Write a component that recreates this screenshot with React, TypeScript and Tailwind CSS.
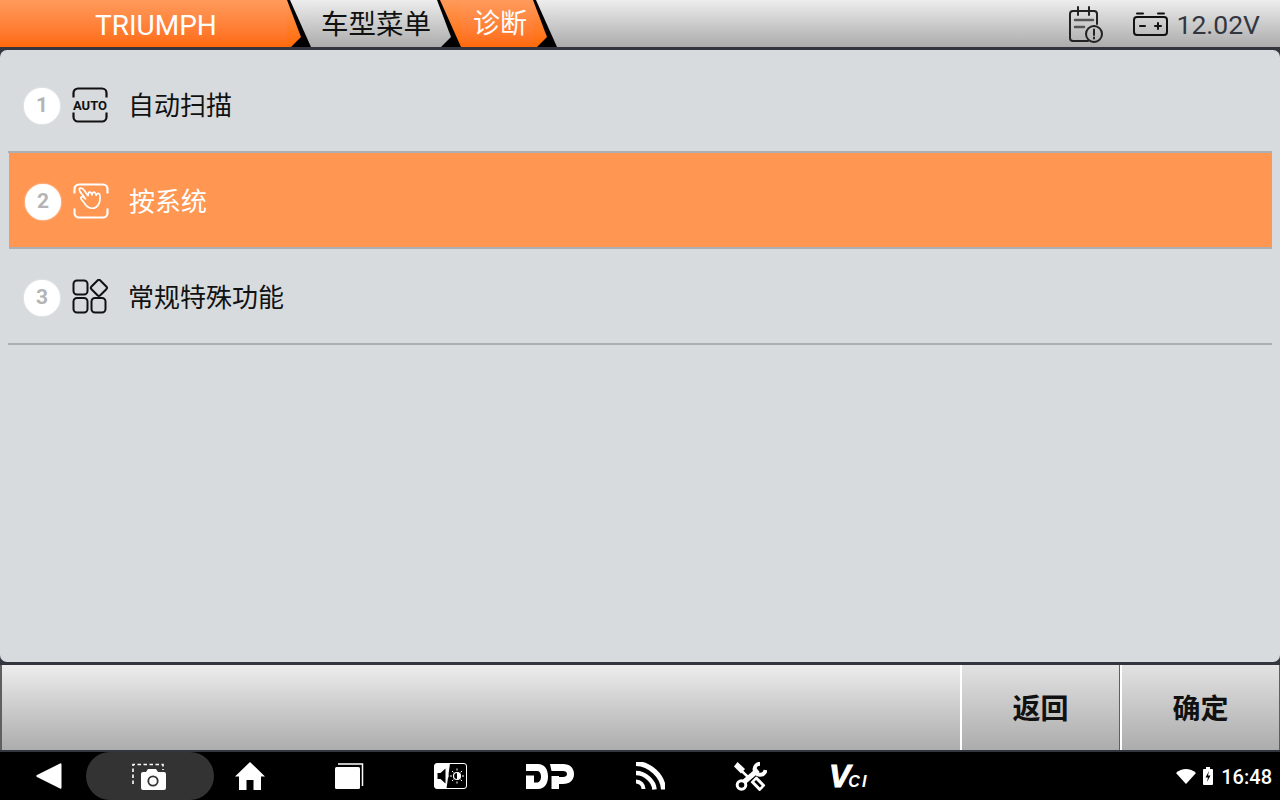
import React from "react";

const ORANGE: [string, string] = ["#ff9a5a", "#ff6a08"];
const GRAY: [string, string] = ["#ededed", "#acacac"];

function Sep({ id, left, right }: { id: string; left: [string, string]; right: [string, string] }) {
  return (
    <svg width="24" height="47" viewBox="0 0 24 47" className="shrink-0 block">
      <defs>
        <linearGradient id={`${id}l`} x1="0" y1="0" x2="0" y2="1">
          <stop offset="0" stopColor={left[0]} />
          <stop offset="1" stopColor={left[1]} />
        </linearGradient>
        <linearGradient id={`${id}r`} x1="0" y1="0" x2="0" y2="1">
          <stop offset="0" stopColor={right[0]} />
          <stop offset="1" stopColor={right[1]} />
        </linearGradient>
      </defs>
      <rect width="24" height="47" fill="#000" />
      <rect width="24" height="47" fill={`url(#${id}l)`} style={{ clipPath: "polygon(0 0, 58.33% 78.7%, 16.67% 100%, 0 100%)" }} />
      <rect width="24" height="47" fill={`url(#${id}r)`} style={{ clipPath: "polygon(12.5% 0, 100% 0, 100% 100%)" }} />
    </svg>
  );
}

function Frame({ color }: { color: string }) {
  return (
    <>
      <path d="M1.500 10.500V6a4.500 4.500 0 0 1 4.500-4.500h24A4.500 4.500 0 0 1 34.500 6v4.500" fill="none" stroke={color} strokeWidth="2.200" />
      <path d="M1.500 25.500V30a4.500 4.500 0 0 0 4.500 4.500h24a4.500 4.500 0 0 0 4.500-4.500v-4.500" fill="none" stroke={color} strokeWidth="2.200" />
    </>
  );
}

function AutoIcon() {
  return (
    <svg width="36" height="36" viewBox="0 0 36 36" className="shrink-0 -mt-[1px]">
      <Frame color="#111" />
      <text x="18" y="22.500" textAnchor="middle" fontSize="12.500" fontWeight="700" fill="#111" fontFamily="Roboto, sans-serif" textLength="34" lengthAdjust="spacingAndGlyphs">AUTO</text>
    </svg>
  );
}

function TouchIcon() {
  return (
    <svg width="36" height="36" viewBox="0 0 36 36" className="shrink-0 -mt-[1px]">
      <Frame color="#fff" />
      <path
        transform="translate(-2.500 -2) scale(1.130)"
        d="M8 6.500c2-.8 3.500.6 4.500 2.200l3 4.300 .3-2c.2-1.500 2-1.500 2.600-.2l.6 1.600.4-1.600c.5-1.300 2.200-1.200 2.700.1l.6 1.700.7-1.100c.8-1 2.400-.5 2.600.9.400 3.200.1 6.200-1.400 8.600-1.600 2.600-4 3.400-6.600 3-2.800-.5-4.600-2.500-6-4.700l-2.600-3.400c-.9-1.400.8-2.700 2.100-1.600l1.800 1.600L8.400 9.400C8 8.500 7.400 7.200 8 6.500Z"
        fill="none"
        stroke="#fff"
        strokeWidth="1.500"
        strokeLinejoin="round"
      />
    </svg>
  );
}

function GridIcon() {
  return (
    <svg width="36" height="36" viewBox="0 0 36 36" className="shrink-0 -mt-[1px]">
      <g fill="none" stroke="#111" strokeWidth="2">
        <rect x="1.500" y="1.500" width="14" height="14" rx="3.500" />
        <rect x="1.500" y="19" width="14" height="14.500" rx="3.500" />
        <rect x="19.500" y="19" width="14" height="14.500" rx="3.500" />
        <path d="M25.500 1.500a2 2 0 0 1 2.800 0l6 6a2 2 0 0 1 0 2.800l-6 6a2 2 0 0 1-2.800 0l-6-6a2 2 0 0 1 0-2.800Z" />
      </g>
    </svg>
  );
}

function Row({ n, label, icon, active }: { n: number; label: string; icon: React.ReactNode; active?: boolean }) {
  return (
    <div className={`flex items-center pl-[16px] pt-[4px] border-b-2 border-[#abafb3] ${active ? "bg-[#ff9651] text-white border-t-2 -mt-[2px] h-[98px] ml-px" : "h-[96px] text-[#111]"}`}>
      <div className="w-[36px] h-[36px] rounded-full bg-white flex items-center justify-center text-[21px] font-bold text-[#b4b4b4] shadow-[0_0_2px_rgba(255,255,255,0.9)] font-['Roboto',sans-serif]">
        {n}
      </div>
      <div className="ml-[12px] w-[36px] h-[36px]">{icon}</div>
      <div className="ml-[20px] text-[26px] leading-none">{label}</div>
    </div>
  );
}

function NavSlot({ children, wide }: { children: React.ReactNode; wide?: boolean }) {
  return (
    <div className="w-[100px] h-[48px] flex items-center justify-center relative">
      {wide && <div className="absolute left-[-14px] top-0 w-[128px] h-[48px] rounded-[24px] bg-[#333333]" />}
      <div className="relative flex items-center justify-center">{children}</div>
    </div>
  );
}

export default function App() {
  return (
    <div className="w-[1280px] h-[800px] flex flex-col overflow-hidden bg-[#33363f] font-['Roboto','Noto_Sans_CJK_SC',sans-serif]">
      <header className="h-[47px] flex bg-gradient-to-b from-[#ededed] to-[#acacac] shrink-0">
        <div className="w-[287px] h-[47px] pl-[95px] pt-[5px] flex items-center text-white text-[28px] bg-gradient-to-b from-[#ff9a5a] to-[#ff6a08]">TRIUMPH</div>
        <Sep id="a" left={ORANGE} right={GRAY} />
        <div className="w-[126px] h-[47px] pl-[10px] pt-[2px] flex items-center text-[27.500px] text-[#111] whitespace-nowrap">车型菜单</div>
        <Sep id="b" left={GRAY} right={ORANGE} />
        <div className="w-[72px] h-[47px] pl-[12px] pt-[2px] flex items-center text-[27px] text-white bg-gradient-to-b from-[#ff9a5a] to-[#ff6a08] whitespace-nowrap">诊断</div>
        <Sep id="c" left={ORANGE} right={GRAY} />
        <div className="flex-1 flex items-center justify-end pr-[20px]">
          <svg width="36" height="38" viewBox="0 0 36 38" className="mt-[3px]">
            <g fill="none" stroke="#222" strokeWidth="2" strokeLinecap="round">
              <path d="M20 35H5a3 3 0 0 1-3-3V8a3 3 0 0 1 3-3h21a3 3 0 0 1 3 3v10" />
              <path d="M10 1v8M21 1v8" />
              <path d="M7 14h18" strokeWidth="2.500" stroke="#555" />
              <path d="M7 21h9" strokeWidth="2.500" stroke="#555" />
              <circle cx="26" cy="28" r="8" />
              <path d="M26 23.500v5.500M26 31.500v1" />
            </g>
          </svg>
          <svg width="35" height="24" viewBox="0 0 35 24" className="ml-[29px] mt-[1px]">
            <g fill="none" stroke="#111" strokeWidth="2" strokeLinecap="round">
              <rect x="1" y="5" width="33" height="18" rx="3" />
              <path d="M4 1.500h6M25 1.500h6" />
              <path d="M7 14h5M22 14h6M25 11v6" />
            </g>
          </svg>
          <span className="ml-[9px] mt-[4px] text-[26.500px] leading-none text-[#33363f]">12.02V</span>
        </div>
      </header>

      <main className="mt-[3px] h-[612px] shrink-0 rounded-[7px] bg-[#d7dbdd] px-[8px] pt-[7px]">
        <Row n={1} label="自动扫描" icon={<AutoIcon />} />
        <Row n={2} label="按系统" icon={<TouchIcon />} active />
        <Row n={3} label="常规特殊功能" icon={<GridIcon />} />
      </main>

      <div className="mt-[3px] h-[85px] shrink-0 flex bg-[#5f5f5f] pr-px">
        <div className="flex-1 bg-gradient-to-b from-[#ededed] to-[#acacac] ml-0.5 border-r-2 border-white" />
        <div className="w-[157px] pt-[4px] flex items-center justify-center bg-gradient-to-b from-[#e2e2e2] to-[#acacac] text-[28px] font-bold text-[#111] mr-px">返回</div>
        <div className="w-[159px] pt-[4px] flex items-center justify-center bg-gradient-to-b from-[#e2e2e2] to-[#acacac] text-[28px] font-bold text-[#111] border-l-2 border-white">确定</div>
      </div>

      <nav className="mt-[2px] h-[48px] shrink-0 bg-black flex items-center relative">
        <NavSlot>
          <svg width="26" height="28" viewBox="0 0 26 28" className="-ml-[2px]"><path d="M24 1.500a1 1 0 0 1 1.500 .8v23.400a1 1 0 0 1-1.500 .8L1 15a1.200 1.200 0 0 1 0-2Z" fill="#fff" /></svg>
        </NavSlot>
        <NavSlot wide>
          <svg width="36" height="28" viewBox="0 0 36 28" className="mt-[2px] -ml-[1px]">
            <path d="M1 21V1.500H31V7" fill="none" stroke="#fff" strokeWidth="1.600" strokeDasharray="3.500 2.500" />
            <path d="M14 9l2-3h8l2 3h6a2 2 0 0 1 2 2v14a2 2 0 0 1-2 2H11a2 2 0 0 1-2-2V11a2 2 0 0 1 2-2Z" fill="#fff" />
            <circle cx="21" cy="18" r="4.700" fill="#fff" stroke="#333" strokeWidth="1.800" />
          </svg>
        </NavSlot>
        <NavSlot>
          <svg width="30" height="28" viewBox="0 0 30 28"><path d="M15 0 30 14.500H26V28H18.500V18H11.500V28H4V14.500H0Z" fill="#fff" /></svg>
        </NavSlot>
        <NavSlot>
          <svg width="30" height="28" viewBox="0 0 30 28" className="-ml-[2px]">
            <rect x="1" y="5" width="25" height="22" rx="1.500" fill="#fff" />
            <path d="M4 2h24.500v22" fill="none" stroke="#fff" strokeWidth="1.500" />
          </svg>
        </NavSlot>
        <NavSlot>
          <svg width="33" height="26" viewBox="0 0 33 26">
            <rect x="0.500" y="0.500" width="32" height="25" rx="2.500" fill="#000" stroke="#fff" />
            <path d="M3 0.500H16L12.500 25.500H3a2.500 2.500 0 0 1-2.500-2.500V3A2.500 2.500 0 0 1 3 .5Z" fill="#fff" />
            <path d="M3.500 10h3l5-4.500v15l-5-4.500h-3Z" fill="#000" />
            <path d="M14 11.500v3" stroke="#fff" strokeWidth="1" />
            <circle cx="23" cy="13" r="3.500" fill="none" stroke="#fff" strokeWidth="1.200" />
            <path d="M23 13V9.500a3.500 3.500 0 0 1 0 7Z" fill="#fff" />
            <path d="M23 5.500v2M23 18.500v2M16 13h2M28 13h2M18 8l1.400 1.400M26.600 16.600l1.400 1.400M28 8l-1.400 1.400M19.400 16.600l-1.400 1.400" stroke="#fff" strokeWidth="1" />
          </svg>
        </NavSlot>
        <NavSlot>
          <svg width="48" height="25" viewBox="0 0 48 25">
            <path d="M0 0H12C18.500 0 22 5 22 12.500S18.500 25 12 25H0V11.500H8V18.500H11C13.500 18.500 15 16 15 12.500S13.500 7 11 7H0Z" fill="#fff" />
            <path d="M24 0H37C44 0 48 4 48 10S44 20 37 20H33V13H37C39.500 13 41 12 41 10S39.500 7 37 7H25.500Z" fill="#fff" />
            <path d="M25.500 12H33V25H25.500Z" fill="#fff" />
          </svg>
        </NavSlot>
        <NavSlot>
          <svg width="30" height="28" viewBox="0 0 30 28">
            <g fill="none" stroke="#fff" strokeLinecap="butt">
              <path d="M1 1.500C15 2 28 14 28.500 27.500" strokeWidth="5" />
              <path d="M1 11C10 11 19 19 19.500 27.500" strokeWidth="4.500" />
            </g>
            <path d="M1 17.500a9.500 9.500 0 0 1 9.500 9.500H6.500a5.500 5.500 0 0 0-5.500-5.500Z" fill="#fff" />
          </svg>
        </NavSlot>
        <NavSlot>
          <svg width="33" height="29" viewBox="0 0 33 29">
            <path d="M2 3.500 15 16" stroke="#fff" strokeWidth="2.500" fill="none" />
            <path d="M3.500 0 11 7 7 11.500 0 4.500Z" fill="#fff" />
            <path d="M10 20 24 8" stroke="#fff" strokeWidth="5" fill="none" />
            <circle cx="7.500" cy="23" r="4.300" fill="#000" stroke="#fff" strokeWidth="3" />
            <path d="M26 1.800A5.500 5.500 0 1 0 31.500 8" fill="none" stroke="#fff" strokeWidth="4" />
            <rect x="17.500" y="17.500" width="13" height="8.500" rx="1" fill="#fff" transform="rotate(45 24 21.750)" />
            <rect x="20" y="20.500" width="8" height="2.500" fill="#000" transform="rotate(45 24 21.750)" />
          </svg>
        </NavSlot>
        <NavSlot>
          <span className="font-['Liberation_Sans',sans-serif] italic font-bold text-white leading-none flex items-baseline w-[42px] whitespace-nowrap">
            <span className="text-[32px] [-webkit-text-stroke:1px_white]">V</span>
            <span className="text-[16px] tracking-[2px] -ml-[2px]">CI</span>
          </span>
        </NavSlot>
        <div className="ml-auto pr-[8px] flex items-center text-white">
          <svg width="20" height="15" viewBox="0 0 20 15"><path d="M10 15 0 4C5.500-1.300 14.500-1.300 20 4Z" fill="#fff" /></svg>
          <svg width="10" height="18" viewBox="0 0 10 18" className="ml-[7px]">
            <path d="M3 0h4v2h2a1 1 0 0 1 1 1v14a1 1 0 0 1-1 1H1a1 1 0 0 1-1-1V3a1 1 0 0 1 1-1h2Z" fill="#fff" />
            <path d="M6 4 2.500 10.500H5L4 15l3.500-6.500H5Z" fill="#000" />
          </svg>
          <span className="ml-[8px] mt-[2px] text-[20px] font-medium leading-none">16:48</span>
        </div>
      </nav>
    </div>
  );
}
